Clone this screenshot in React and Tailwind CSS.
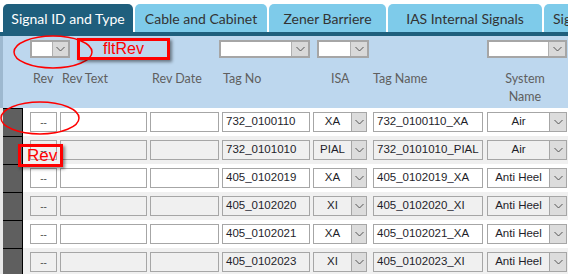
import React from "react";

const rows = [
  { tag: "732_0100110", isa: "XA", name: "732_0100110_XA", sys: "Air" },
  { tag: "732_0101010", isa: "PIAL", name: "732_0101010_PIAL", sys: "Air" },
  { tag: "405_0102019", isa: "XA", name: "405_0102019_XA", sys: "Anti Heel" },
  { tag: "405_0102020", isa: "XI", name: "405_0102020_XI", sys: "Anti Heel" },
  { tag: "405_0102021", isa: "XA", name: "405_0102021_XA", sys: "Anti Heel" },
  { tag: "405_0102023", isa: "XI", name: "405_0102023_XI", sys: "Anti Heel" },
];

function Chevron() {
  return (
    <svg width="9" height="6" viewBox="0 0 9 6" className="block">
      <polyline points="0.5,1 4.5,5 8.5,1" fill="none" stroke="#555" strokeWidth="1" />
    </svg>
  );
}

function Tab({ label, active, w, left }) {
  return (
    <div
      className={
        "h-[28px] rounded-t-[5px] flex items-center shrink-0 text-[14px] whitespace-nowrap overflow-hidden " +
        (left ? "justify-start pl-[9px] " : "justify-center ") +
        (active ? "bg-[#1f5f7d] text-white" : "bg-[#7ecbea] text-[#333]")
      }
      style={{ width: w }}
    >
      {label}
    </div>
  );
}

function FilterSelect({ w, btn = 17 }) {
  return (
    <div className="h-[18px] flex border-2 border-[#a6a6a6] bg-white shrink-0" style={{ width: w }}>
      <div className="flex-1" />
      <div className="bg-[#d9d9d9] flex items-center justify-center border-l border-[#b0b0b0]" style={{ width: btn }}>
        <Chevron />
      </div>
    </div>
  );
}

export default function App() {
  return (
    <div className="relative w-[568px] h-[274px] overflow-hidden bg-white font-['Lato',sans-serif]">
      {/* Tabs */}
      <div className="pt-[4px] pl-[3px] flex gap-[2px] bg-white">
        <Tab label="Signal ID and Type" active w={130} />
        <Tab label="Cable and Cabinet" w={132} />
        <Tab label="Zener Barriere" w={117} />
        <Tab label="IAS Internal Signals" w={154} />
        <Tab label="Signals" w={40} left />
      </div>
      <div className="h-[4px] bg-[#1f5f7d]" />

      {/* Header */}
      <div className="h-[72px] bg-[#bdd7ee] border-l-[3px] border-[#9db8cf] text-[12.5px] text-[#5f5f5f]">
        <div className="flex items-center pt-[4px] h-[22px]">
          <div className="ml-[27px]"><FilterSelect w={40} btn={16} /></div>
          <div className="ml-[149px]"><FilterSelect w={91} /></div>
          <div className="ml-[7px]"><FilterSelect w={52} /></div>
          <div className="ml-[118px]"><FilterSelect w={80} /></div>
        </div>
        <div className="flex items-start pt-[12px] leading-[18px]">
          <div className="ml-[30px] w-[27px]">Rev</div>
          <div className="ml-[2px] w-[88px]">Rev Text</div>
          <div className="ml-[2px] w-[70px]">Rev Date</div>
          <div className="ml-[1px] w-[108px]">Tag No</div>
          <div className="w-[42px]">ISA</div>
          <div className="w-[112px]">Tag Name</div>
          <div className="w-[80px] text-center">System<br />Name</div>
        </div>
      </div>

      {/* Rows */}
      <div className="font-['Liberation_Sans',sans-serif] text-[11.5px] text-[#1e1e2a]">
        {rows.map((r, i) => {
          const bg = i % 2 === 0 ? "bg-white" : "bg-[#f0f0f0]";
          const box = "h-[20px] border border-[#a6a6a6] shrink-0 flex items-center " + bg;
          return (
            <div key={i} className={"h-[28px] flex items-center " + bg}>
              <div className="h-full w-[23px] pl-[3px] bg-[#e8e8e8] shrink-0">
                <div className="h-full bg-[#5f5f5f] border-t border-r border-black" />
              </div>
              <div className={box + " ml-[7px] w-[27px] justify-center text-[#555] text-[10px]"}>--</div>
              <div className={box + " ml-[3px] w-[87px]"} />
              <div className={box + " ml-[3px] w-[69px]"} />
              <div className={box + " ml-[3px] w-[88px] pl-[3px]"}>{r.tag}</div>
              <div className={box + " ml-[3px] w-[54px]"}>
                <div className="flex-1 text-center">{r.isa}</div>
                <div className="w-[15px] h-full bg-[#dcdcdc] border-l border-[#a6a6a6] flex items-center justify-center">
                  <Chevron />
                </div>
              </div>
              <div className={box + " ml-[6px] w-[110px] pl-[3px]"}>{r.name}</div>
              <div className={box + " ml-[4px] w-[80px]"}>
                <div className="flex-1 text-center">{r.sys}</div>
                <div className="w-[17px] h-full bg-[#dcdcdc] border-l border-[#a6a6a6] flex items-center justify-center">
                  <Chevron />
                </div>
              </div>
            </div>
          );
        })}
      </div>

      {/* Annotations */}
      <svg className="absolute left-0 top-0 pointer-events-none" width="568" height="274">
        <ellipse cx="53" cy="52" rx="39" ry="16" fill="none" stroke="#ff0000" strokeWidth="1.5" />
        <ellipse cx="40" cy="118" rx="39" ry="16" fill="none" stroke="#ff0000" strokeWidth="1.5" />
      </svg>
      <div className="absolute left-[77px] top-[38px] w-[93px] h-[22px] border-[3px] border-[#ff0000] shadow-[2px_2px_3px_rgba(0,0,0,0.45)] flex items-center pl-[23px] font-['Liberation_Sans',sans-serif] text-[16px] text-[#ff0000] leading-none">
        fltRev
      </div>
      <div className="absolute left-[18px] top-[144px] w-[45px] h-[23px] border-[3px] border-[#ff0000] shadow-[2px_2px_3px_rgba(0,0,0,0.45)] flex items-center pl-[6px] font-['Liberation_Sans',sans-serif] text-[17px] text-[#ff0000] leading-none">
        Rev
      </div>
    </div>
  );
}
